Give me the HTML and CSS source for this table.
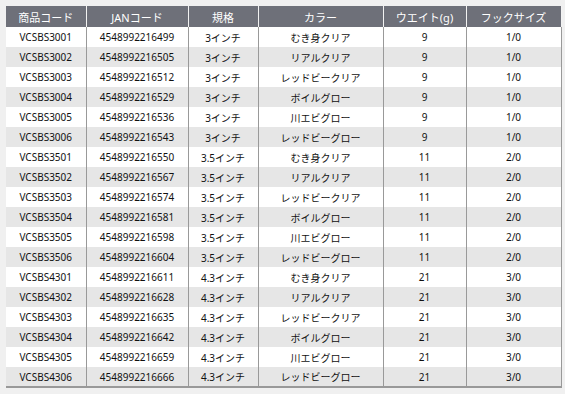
FILE: index.html
```html
<!DOCTYPE html>
<html>
<head>
  <title>VCSBS 製品仕様</title>
  <link rel="stylesheet" href="styles.css">
</head>
<body>
  <table class="spec-table">
    <thead>
      <tr>
        <th class="col-code">商品コード</th>
        <th class="col-jan">JANコード</th>
        <th class="col-size">規格</th>
        <th class="col-color">カラー</th>
        <th class="col-weight">ウエイト(g)</th>
        <th class="col-hook">フックサイズ</th>
      </tr>
    </thead>
    <tbody>
      <tr><td>VCSBS3001</td><td>4548992216499</td><td>3インチ</td><td>むき身クリア</td><td>9</td><td>1/0</td></tr>
      <tr><td>VCSBS3002</td><td>4548992216505</td><td>3インチ</td><td>リアルクリア</td><td>9</td><td>1/0</td></tr>
      <tr><td>VCSBS3003</td><td>4548992216512</td><td>3インチ</td><td>レッドビークリア</td><td>9</td><td>1/0</td></tr>
      <tr><td>VCSBS3004</td><td>4548992216529</td><td>3インチ</td><td>ボイルグロー</td><td>9</td><td>1/0</td></tr>
      <tr><td>VCSBS3005</td><td>4548992216536</td><td>3インチ</td><td>川エビグロー</td><td>9</td><td>1/0</td></tr>
      <tr><td>VCSBS3006</td><td>4548992216543</td><td>3インチ</td><td>レッドビーグロー</td><td>9</td><td>1/0</td></tr>
      <tr><td>VCSBS3501</td><td>4548992216550</td><td>3.5インチ</td><td>むき身クリア</td><td>11</td><td>2/0</td></tr>
      <tr><td>VCSBS3502</td><td>4548992216567</td><td>3.5インチ</td><td>リアルクリア</td><td>11</td><td>2/0</td></tr>
      <tr><td>VCSBS3503</td><td>4548992216574</td><td>3.5インチ</td><td>レッドビークリア</td><td>11</td><td>2/0</td></tr>
      <tr><td>VCSBS3504</td><td>4548992216581</td><td>3.5インチ</td><td>ボイルグロー</td><td>11</td><td>2/0</td></tr>
      <tr><td>VCSBS3505</td><td>4548992216598</td><td>3.5インチ</td><td>川エビグロー</td><td>11</td><td>2/0</td></tr>
      <tr><td>VCSBS3506</td><td>4548992216604</td><td>3.5インチ</td><td>レッドビーグロー</td><td>11</td><td>2/0</td></tr>
      <tr><td>VCSBS4301</td><td>4548992216611</td><td>4.3インチ</td><td>むき身クリア</td><td>21</td><td>3/0</td></tr>
      <tr><td>VCSBS4302</td><td>4548992216628</td><td>4.3インチ</td><td>リアルクリア</td><td>21</td><td>3/0</td></tr>
      <tr><td>VCSBS4303</td><td>4548992216635</td><td>4.3インチ</td><td>レッドビークリア</td><td>21</td><td>3/0</td></tr>
      <tr><td>VCSBS4304</td><td>4548992216642</td><td>4.3インチ</td><td>ボイルグロー</td><td>21</td><td>3/0</td></tr>
      <tr><td>VCSBS4305</td><td>4548992216659</td><td>4.3インチ</td><td>川エビグロー</td><td>21</td><td>3/0</td></tr>
      <tr><td>VCSBS4306</td><td>4548992216666</td><td>4.3インチ</td><td>レッドビーグロー</td><td>21</td><td>3/0</td></tr>
    </tbody>
  </table>
</body>
</html>
```

FILE: styles.css
```css
* {
  margin: 0;
  padding: 0;
  box-sizing: border-box;
}

body {
  background-color: #f0f0f0;
  padding: 6px 4px 0 6px;
  font-family: "Noto Sans", "Noto Sans CJK JP", sans-serif;
  font-size: 10px;
  color: #111;
}

.spec-table {
  width: 555px;
  border-collapse: collapse;
  table-layout: fixed;
  border-bottom: 2px solid #999;
}

.spec-table th {
  height: 21px;
  background-color: #6e7079;
  color: #fff;
  font-weight: 400;
  font-size: 11px;
  border-left: 1px solid #f2f2f2;
  text-align: center;
}

.spec-table th:first-child {
  border-left: none;
}

.spec-table td {
  height: 20px;
  text-align: center;
  border-left: 1px solid #999;
  background-color: #fff;
}

.spec-table td:first-child {
  border-left: none;
}

.spec-table th:last-child,
.spec-table td:last-child {
  border-right: 1px solid #999;
}

.spec-table th:last-child {
  border-right-color: #f2f2f2;
}

.spec-table tbody tr:nth-child(even) td {
  background-color: #e6e6e6;
}

.col-code { width: 80px; }
.col-jan { width: 102px; }
.col-size { width: 70px; }
.col-color { width: 125px; }
.col-weight { width: 83px; }
.col-hook { width: 95px; }
```
